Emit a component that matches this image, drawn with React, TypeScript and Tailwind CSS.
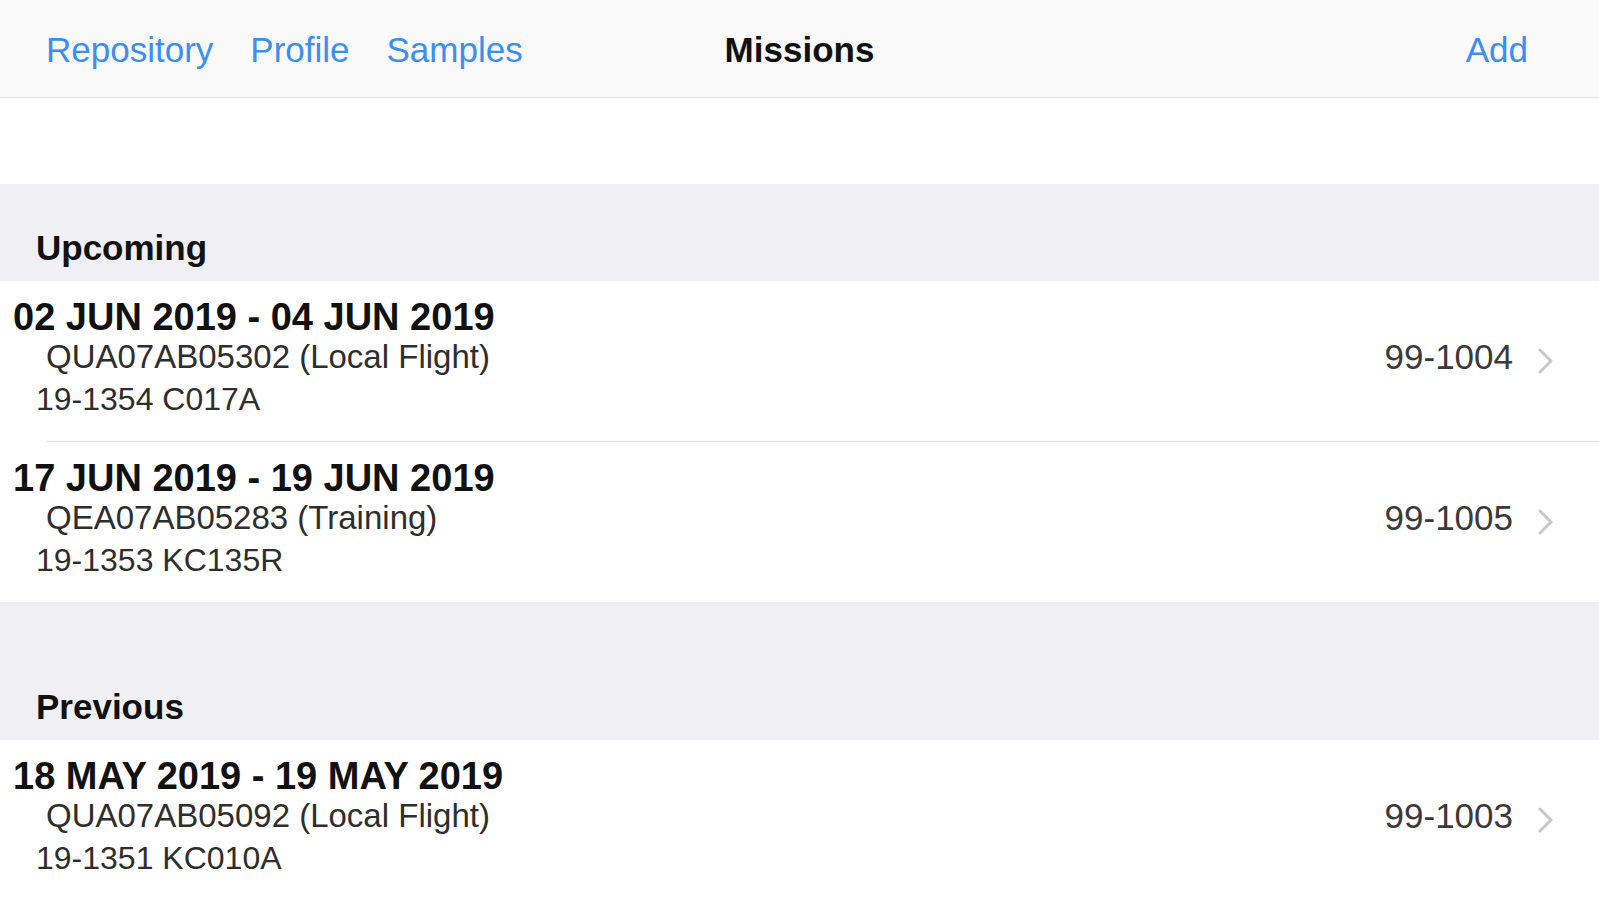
type Mission = {
  dates: string
  code: string
  tail: string
  id: string
}

const upcoming: Mission[] = [
  { dates: '02 JUN 2019 - 04 JUN 2019', code: 'QUA07AB05302 (Local Flight)', tail: '19-1354 C017A', id: '99-1004' },
  { dates: '17 JUN 2019 - 19 JUN 2019', code: 'QEA07AB05283 (Training)', tail: '19-1353 KC135R', id: '99-1005' },
]

const previous: Mission[] = [
  { dates: '18 MAY 2019 - 19 MAY 2019', code: 'QUA07AB05092 (Local Flight)', tail: '19-1351 KC010A', id: '99-1003' },
]

function Chevron() {
  return (
    <svg width="15" height="26" viewBox="0 0 15 26" fill="none" className="ml-[25px] mt-[8px] shrink-0">
      <path d="M2 2 L13 13 L2 24" stroke="#c7c7cc" strokeWidth="3" strokeLinecap="round" strokeLinejoin="round" />
    </svg>
  )
}

function MissionRow({ m, last }: { m: Mission; last: boolean }) {
  return (
    <div className="bg-white">
      <div className="flex items-start pt-[16px] pb-[20px] pr-[46px]">
        <div className="flex-1 min-w-0">
          <div className="pl-[13px] text-[38px] leading-[40px] font-bold text-[#111]">{m.dates}</div>
          <div className="pl-[46px] text-[33px] leading-[40px] text-[#2e2e2e]">{m.code}</div>
          <div className="pl-[36px] text-[32px] leading-[44px] text-[#2e2e2e]">{m.tail}</div>
        </div>
        <div className="mt-[40px] flex items-center h-[40px]">
          <span className="text-[35px] leading-[40px] text-[#3a3a3a]">{m.id}</span>
          <Chevron />
        </div>
      </div>
      {!last && <div className="ml-[46px] h-px bg-[#e4e4e8]" />}
    </div>
  )
}

export default function App() {
  return (
    <div className="min-h-screen bg-white" style={{ fontFamily: '"Liberation Sans", Arial, sans-serif' }}>
      {/* ── Nav bar ── */}
      <header className="grid grid-cols-[1fr_auto_1fr] items-center h-[98px] pt-[4px] bg-[#f9f9f9] border-b border-[#e2e2e2]">
        <nav className="flex items-center gap-[37px] pl-[46px] text-[35px] text-[#3b8ef3]">
          <span>Repository</span>
          <span>Profile</span>
          <span>Samples</span>
        </nav>
        <h1 className="text-[35px] font-bold text-[#111]">Missions</h1>
        <div className="flex justify-end pr-[71px] text-[35px] text-[#3b8ef3]">Add</div>
      </header>

      <div className="h-[86px] bg-white" />

      {/* ── Upcoming ── */}
      <div className="bg-[#efeff4] h-[97px] flex items-end pb-[13px] pl-[36px]">
        <span className="text-[35px] leading-[40px] font-bold text-[#111]">Upcoming</span>
      </div>
      {upcoming.map((m, i) => (
        <MissionRow key={m.id} m={m} last={i === upcoming.length - 1} />
      ))}

      {/* ── Previous ── */}
      <div className="bg-[#efeff4] h-[138px] flex items-end pb-[13px] pl-[36px]">
        <span className="text-[35px] leading-[40px] font-bold text-[#111]">Previous</span>
      </div>
      {previous.map((m, i) => (
        <MissionRow key={m.id} m={m} last={i === previous.length - 1} />
      ))}
    </div>
  )
}
